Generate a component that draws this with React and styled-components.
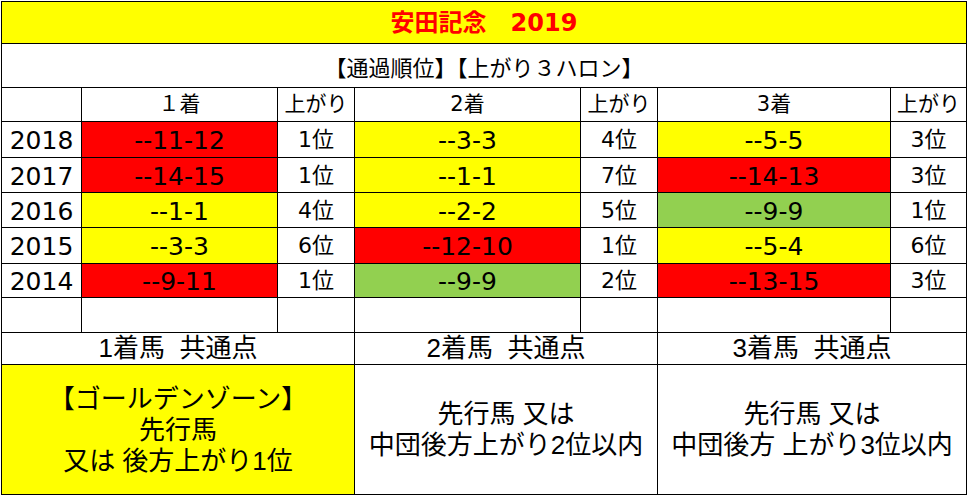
import React from "react";
import styled, { createGlobalStyle } from "styled-components";

const Global = createGlobalStyle`
  html, body { margin: 0; padding: 0; background: #ffffff; }
  body { font-family: "DejaVu Sans", "Noto Sans CJK JP", sans-serif; color: #000; }
`;

const COLORS = {
  red: "#ff0000",
  yellow: "#ffff00",
  green: "#92d050",
  white: "#ffffff",
};

const Sheet = styled.div`
  display: grid;
  grid-template-columns: 79px 195px 76px 225px 76px 232px 75px;
  grid-template-rows: 41px 43px 33px 35px 34px 34px 35px 33px 34px 31px 129px;
  gap: 1px;
  padding: 1px;
  background: #000;
  width: max-content;
  margin: 1px 0 0 1px;
`;

const Cell = styled.div`
  grid-column: span ${(p) => p.$span || 1};
  background: ${(p) => COLORS[p.$bg || "white"]};
  display: flex;
  align-items: center;
  justify-content: center;
  text-align: center;
  white-space: pre;
  overflow: hidden;
  line-height: 1;
`;

const Title = styled(Cell)`
  font-family: "DejaVu Sans", "Noto Sans CJK JP", sans-serif;
  font-weight: 700;
  font-size: 24px;
  color: #ff0000;
  padding-top: 1px;
`;

const Subtitle = styled(Cell)`
  font-family: "Noto Sans CJK JP", sans-serif;
  font-size: 22px;
`;

const Head = styled(Cell)`
  font-family: "DejaVu Sans", "Noto Sans CJK JP", sans-serif;
  font-size: 21px;
`;

const Value = styled(Cell)`
  font-family: "DejaVu Sans", "Noto Sans CJK JP", sans-serif;
  font-size: 25px;
  padding-top: 2px;
`;

const Rank = styled(Cell)`
  font-family: "DejaVu Sans", "Noto Sans CJK JP", sans-serif;
  font-size: 22px;
  padding-top: 1px;
`;

const Summary = styled(Cell)`
  font-family: "Liberation Sans", "Noto Sans CJK JP", sans-serif;
  font-size: 26px;
  line-height: 31px;
  white-space: pre;
  padding-top: ${(p) => (p.$tall ? "2px" : "0")};
`;

const rows = [
  { year: "2018", cells: [["--11-12", "red", "1位"], ["--3-3", "yellow", "4位"], ["--5-5", "yellow", "3位"]] },
  { year: "2017", cells: [["--14-15", "red", "1位"], ["--1-1", "yellow", "7位"], ["--14-13", "red", "3位"]] },
  { year: "2016", cells: [["--1-1", "yellow", "4位"], ["--2-2", "yellow", "5位"], ["--9-9", "green", "1位"]] },
  { year: "2015", cells: [["--3-3", "yellow", "6位"], ["--12-10", "red", "1位"], ["--5-4", "yellow", "6位"]] },
  { year: "2014", cells: [["--9-11", "red", "1位"], ["--9-9", "green", "2位"], ["--13-15", "red", "3位"]] },
];

export default function App() {
  return (
    <>
      <Global />
      <Sheet>
        <Title $span={7} $bg="yellow">安田記念　2019</Title>
        <Subtitle $span={7}>【通過順位】【上がり３ハロン】</Subtitle>

        <Head />
        <Head>１着</Head>
        <Head>上がり</Head>
        <Head>2着</Head>
        <Head>上がり</Head>
        <Head>3着</Head>
        <Head>上がり</Head>

        {rows.map((r) => (
          <React.Fragment key={r.year}>
            <Value>{r.year}</Value>
            {r.cells.map(([v, bg, rank], i) => (
              <React.Fragment key={i}>
                <Value $bg={bg}>{v}</Value>
                <Rank>{rank}</Rank>
              </React.Fragment>
            ))}
          </React.Fragment>
        ))}

        {Array.from({ length: 7 }).map((_, i) => (
          <Cell key={`e${i}`} />
        ))}

        <Summary $span={3}>{"1着馬  共通点"}</Summary>
        <Summary $span={2}>{"2着馬  共通点"}</Summary>
        <Summary $span={2}>{"3着馬  共通点"}</Summary>

        <Summary $span={3} $bg="yellow" $tall>
          {"【ゴールデンゾーン】\n先行馬\n又は 後方上がり1位"}
        </Summary>
        <Summary $span={2}>{"先行馬 又は\n中団後方上がり2位以内"}</Summary>
        <Summary $span={2}>{"先行馬 又は\n中団後方 上がり3位以内"}</Summary>
      </Sheet>
    </>
  );
}
